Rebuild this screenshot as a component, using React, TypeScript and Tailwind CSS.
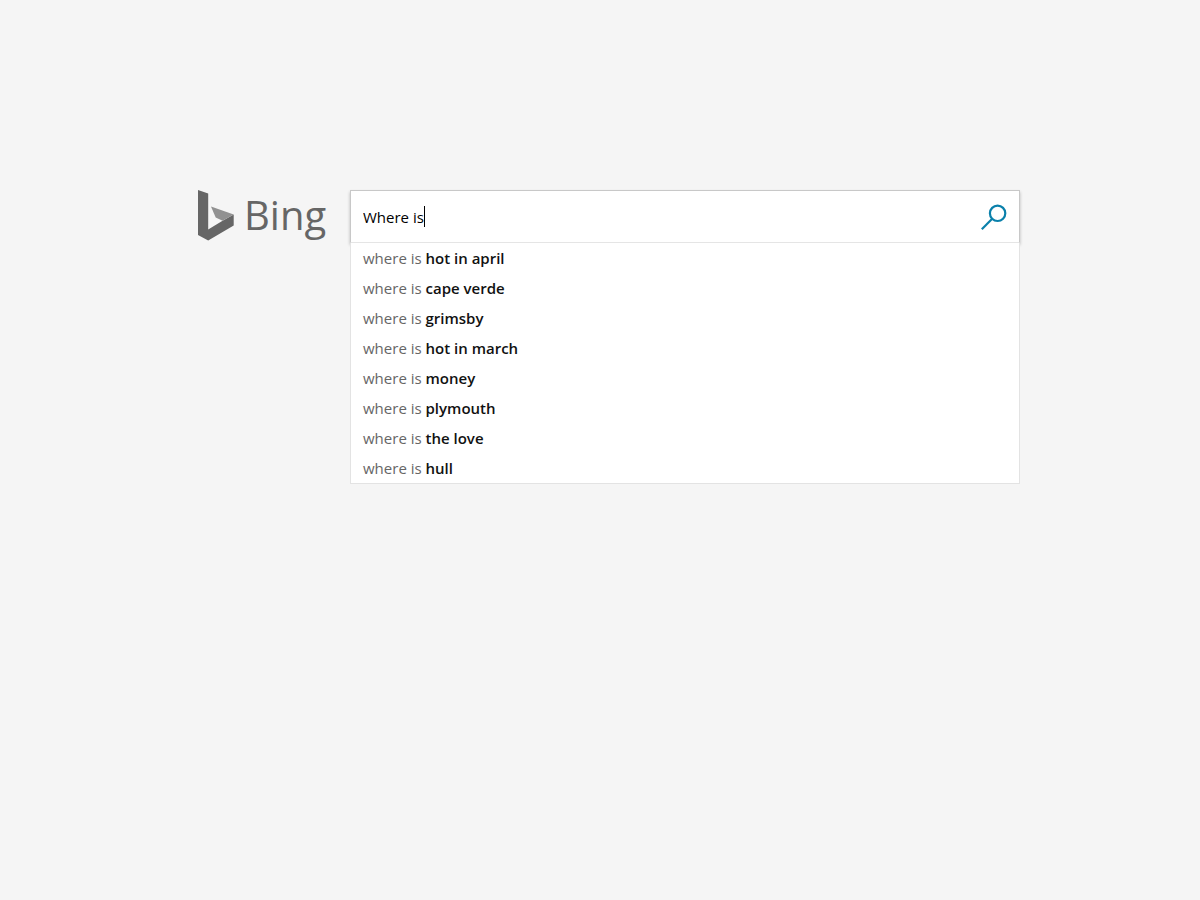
import { useState } from 'react';

const suggestions = [
  'hot in april',
  'cape verde',
  'grimsby',
  'hot in march',
  'money',
  'plymouth',
  'the love',
  'hull',
];

const Logo = () => (
  <a href="#" aria-label="Bing home" className="flex w-[152px] shrink-0 items-start text-[#666666]">
    <svg viewBox="0 0 36 52" className="h-[52px] w-9 shrink-0" aria-hidden="true">
      <path fill="#666666" d="M0 0 L10.2 3.4 V39.4 L24.6 30.8 L35.7 24.6 V35.6 L10.2 50.6 L0 45 Z" />
      <path fill="#919191" d="M13 16.6 L35.7 24.6 L24.6 30.8 L17.7 27.5 Z" />
    </svg>
    <span className="ml-2.5 text-[40px] leading-[50px]">Bing</span>
  </a>
);

const SearchIcon = () => (
  <svg viewBox="0 0 26 26" className="size-[26px]" fill="none" stroke="#0a80ab" strokeWidth="2.2" aria-hidden="true">
    <circle cx="16.6" cy="9.3" r="7.7" />
    <path d="M11.2 14.8 L0.8 25.2" />
  </svg>
);

const App = () => {
  const [query, setQuery] = useState('Where is');
  const [isEditing, setIsEditing] = useState(false);

  return (
    <div className="min-h-screen bg-[#f5f5f5] font-['Open_Sans',sans-serif]">
      <main className="flex items-start pt-[190px] pr-[180px] pl-[198px]">
        <Logo />
        <div className="min-w-0 flex-1">
          <form
            onSubmit={(e) => e.preventDefault()}
            className="relative flex h-[53px] items-center border border-b-[#e5e5e5] border-t-[#c8c8c8] border-x-[#c8c8c8] bg-white shadow-[0_2px_3px_0_rgba(0,0,0,0.25)]"
          >
            <input
              type="text"
              value={query}
              onChange={(e) => setQuery(e.target.value)}
              onFocus={() => setIsEditing(true)}
              aria-label="Search the web"
              className="h-full min-w-0 flex-1 bg-transparent px-3 text-[15px] text-black outline-none"
            />
            {/* Resting caret, replaced by the native one on focus */}
            {!isEditing && <span className="absolute top-[15px] left-[73px] h-[21px] w-px bg-black" />}
            <button type="submit" aria-label="Search" className="mr-3 shrink-0">
              <SearchIcon />
            </button>
          </form>
          <ul className="relative border border-t-0 border-[#e3e3e3] bg-white">
            {suggestions.map((s) => (
              <li key={s}>
                <a href="#" className="block px-3 text-[15px] leading-[30px] text-[#666666] hover:bg-gray-100">
                  where is <strong className="font-semibold text-[#111111]">{s}</strong>
                </a>
              </li>
            ))}
          </ul>
        </div>
      </main>
    </div>
  );
};

export default App;
